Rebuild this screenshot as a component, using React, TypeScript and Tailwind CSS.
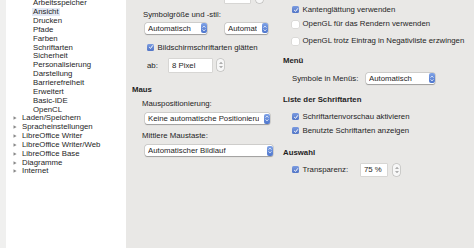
import React from 'react';

const font = { fontFamily: '"Liberation Sans", Arial, sans-serif' };

function Arrows() {
  return (
    <svg width="4" height="7" viewBox="0 0 4 7" className="block">
      <path d="M0.6 2.6 L2 1.1 L3.4 2.6" fill="none" stroke="white" strokeWidth="0.8" />
      <path d="M0.6 4.4 L2 5.9 L3.4 4.4" fill="none" stroke="white" strokeWidth="0.8" />
    </svg>
  );
}

function Select({ w, text }: { w: string; text: string }) {
  return (
    <div className={`${w} h-[11px] bg-white rounded-[2px] shadow-[0_0_0_0.5px_rgba(0,0,0,0.18),0_0.5px_1px_rgba(0,0,0,0.25)] flex items-center justify-between pl-[3px] pr-[0.5px] shrink-0`}>
      <span className="whitespace-nowrap overflow-hidden leading-none">{text}</span>
      <div className="w-[6px] h-[10px] rounded-[2px] bg-gradient-to-b from-[#7fa2e6] to-[#4f76cc] flex items-center justify-center shrink-0">
        <Arrows />
      </div>
    </div>
  );
}

function Stepper() {
  return (
    <div className="w-[7px] h-[12px] rounded-[3px] bg-[#f7f7f7] shadow-[0_0_0_0.5px_rgba(0,0,0,0.25)] flex items-center justify-center">
      <svg width="4" height="8" viewBox="0 0 4 8" className="block">
        <path d="M0.7 3 L2 1.5 L3.3 3" fill="none" stroke="#555" strokeWidth="0.7" />
        <path d="M0.7 5 L2 6.5 L3.3 5" fill="none" stroke="#555" strokeWidth="0.7" />
      </svg>
    </div>
  );
}

function Check({ on = true, label }: { on?: boolean; label: string }) {
  return (
    <div className="h-[9px] flex items-center gap-[3.5px]">
      {on ? (
        <div className="w-[7px] h-[7px] shrink-0 rounded-[1.5px] bg-gradient-to-b from-[#7b9be0] to-[#5275c6] flex items-center justify-center">
          <svg width="6" height="6" viewBox="0 0 6 6" className="block">
            <path d="M1.2 3.1 L2.5 4.4 L4.9 1.3" fill="none" stroke="white" strokeWidth="1" />
          </svg>
        </div>
      ) : (
        <div className="w-[7px] h-[7px] shrink-0 rounded-[1.5px] bg-white shadow-[0_0_0_0.5px_rgba(0,0,0,0.12)]" />
      )}
      <span className="leading-none whitespace-nowrap">{label}</span>
    </div>
  );
}

const tree: { t: string; top?: boolean; sel?: boolean }[] = [
  { t: 'Arbeitsspeicher' },
  { t: 'Ansicht', sel: true },
  { t: 'Drucken' },
  { t: 'Pfade' },
  { t: 'Farben' },
  { t: 'Schriftarten' },
  { t: 'Sicherheit' },
  { t: 'Personalisierung' },
  { t: 'Darstellung' },
  { t: 'Barrierefreiheit' },
  { t: 'Erweitert' },
  { t: 'Basic-IDE' },
  { t: 'OpenCL' },
  { t: 'Laden/Speichern', top: true },
  { t: 'Spracheinstellungen', top: true },
  { t: 'LibreOffice Writer', top: true },
  { t: 'LibreOffice Writer/Web', top: true },
  { t: 'LibreOffice Base', top: true },
  { t: 'Diagramme', top: true },
  { t: 'Internet', top: true },
];

export default function App() {
  return (
    <div className="w-[474px] h-[248px] overflow-hidden flex bg-[#e9e8e6] text-[7.8px] text-[#1e1e1e]" style={font}>
      {/* Baum links */}
      <div className="w-[6px] shrink-0 h-full bg-[#f0f0ef]" />
      <div className="w-[120px] shrink-0 h-full bg-white overflow-hidden">
        <div className="mt-[-1.1px] flex flex-col">
          {tree.map((it) => (
            <div key={it.t} className="h-[8.85px] flex items-center">
              {it.top ? (
                <>
                  <div className="w-[6px] ml-[6px] flex justify-center">
                    <svg width="4" height="4" viewBox="0 0 4 4" className="block">
                      <path d="M0.5 0.3 L3.6 2 L0.5 3.7 Z" fill="#8a8a8a" />
                    </svg>
                  </div>
                  <span className="ml-[4px] leading-none whitespace-nowrap">{it.t}</span>
                </>
              ) : it.sel ? (
                <span className="ml-[26px] px-[1px] leading-none whitespace-nowrap bg-[#e2e8f4]">{it.t}</span>
              ) : (
                <span className="ml-[27px] leading-none whitespace-nowrap">{it.t}</span>
              )}
            </div>
          ))}
        </div>
      </div>

      {/* linke Spalte */}
      <div className="w-[157px] shrink-0 flex flex-col pl-[6px]">
        <div className="mt-[-9px] h-[12px] flex items-center gap-[6px] ml-[93px]">
          <div className="w-[25px] h-[12px] bg-white shadow-[0_0_0_0.5px_rgba(0,0,0,0.15)]" />
          <Stepper />
        </div>
        <div className="mt-[7.2px] h-[9px] flex items-center ml-[11px]">Symbolgröße und -stil:</div>
        <div className="mt-[3.8px] flex items-center ml-[13px] gap-[18px]">
          <Select w="w-[62px]" text="Automatisch" />
          <Select w="w-[43px]" text="Automat" />
        </div>
        <div className="mt-[9px] ml-[15px]">
          <Check label="Bildschirmschriftarten glätten" />
        </div>
        <div className="mt-[6.8px] h-[13.4px] flex items-center ml-[15px]">
          <span className="w-[22px] leading-none">ab:</span>
          <div className="w-[43px] h-[13.4px] bg-white shadow-[0_0_0_0.5px_rgba(0,0,0,0.15)] flex items-center pl-[3px]">8 Pixel</div>
          <div className="ml-[5px]"><Stepper /></div>
        </div>
        <div className="mt-[12.8px] h-[9px] flex items-center font-bold">Maus</div>
        <div className="mt-[5px] h-[9px] flex items-center ml-[10px]">Mauspositionierung:</div>
        <div className="mt-[5.5px] ml-[13px]">
          <Select w="w-[125px]" text="Keine automatische Positionieru" />
        </div>
        <div className="mt-[6.5px] h-[9px] flex items-center ml-[10px]">Mittlere Maustaste:</div>
        <div className="mt-[5.5px] ml-[13px]">
          <Select w="w-[128px]" text="Automatischer Bildlauf" />
        </div>
      </div>

      {/* rechte Spalte */}
      <div className="flex-1 min-w-0 flex flex-col">
        <div className="mt-[5px] ml-[9px]"><Check label="Kantenglättung verwenden" /></div>
        <div className="mt-[5.8px] ml-[9px]"><Check on={false} label="OpenGL für das Rendern verwenden" /></div>
        <div className="mt-[8px] ml-[9px]"><Check on={false} label="OpenGL trotz Eintrag in Negativliste erzwingen" /></div>
        <div className="mt-[10.7px] h-[9px] flex items-center font-bold">Menü</div>
        <div className="mt-[7.5px] h-[11px] flex items-center ml-[9px]">
          <span className="w-[74px] leading-none whitespace-nowrap">Symbole in Menüs:</span>
          <Select w="w-[69px]" text="Automatisch" />
        </div>
        <div className="mt-[11.5px] h-[9px] flex items-center font-bold">Liste der Schriftarten</div>
        <div className="mt-[8px] ml-[9px]"><Check label="Schriftartenvorschau aktivieren" /></div>
        <div className="mt-[5px] ml-[9px]"><Check label="Benutzte Schriftarten anzeigen" /></div>
        <div className="mt-[13px] h-[9px] flex items-center font-bold">Auswahl</div>
        <div className="mt-[6.5px] h-[12px] flex items-center ml-[9px]">
          <div className="w-[69px]"><Check label="Transparenz:" /></div>
          <div className="w-[26px] h-[12px] bg-white shadow-[0_0_0_0.5px_rgba(0,0,0,0.15)] flex items-center pl-[3px]">75 %</div>
          <div className="ml-[6px]"><Stepper /></div>
        </div>
      </div>
    </div>
  );
}
